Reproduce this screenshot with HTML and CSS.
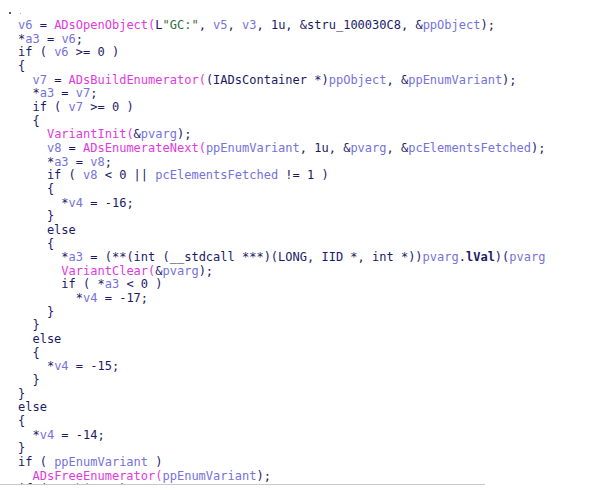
FILE: index.html
```html
<!DOCTYPE html>
<html>
<head>
<meta charset="utf-8">
<link rel="stylesheet" href="styles.css">
</head>
<body>
<div class="view">
<div class="code"><div class="dots"><span class="dot"></span><span class="dot dot2"></span></div>
<div class="ln"><span class="v">v6</span> = <span class="f">ADsOpenObject(</span>L<span class="s">"GC:"</span>, <span class="v">v5</span>, <span class="v">v3</span>, 1u, &amp;stru_100030C8, &amp;<span class="v">ppObject</span>);</div>
<div class="ln">*<span class="v">a3</span> = <span class="v">v6</span>;</div>
<div class="ln">if ( <span class="v">v6</span> &gt;= 0 )</div>
<div class="ln">{</div>
<div class="ln">  <span class="v">v7</span> = <span class="f">ADsBuildEnumerator(</span>(IADsContainer *)<span class="v">ppObject</span>, &amp;<span class="v">ppEnumVariant</span>);</div>
<div class="ln">  *<span class="v">a3</span> = <span class="v">v7</span>;</div>
<div class="ln">  if ( <span class="v">v7</span> &gt;= 0 )</div>
<div class="ln">  {</div>
<div class="ln">    <span class="f">VariantInit(</span>&amp;<span class="v">pvarg</span>);</div>
<div class="ln">    <span class="v">v8</span> = <span class="f">ADsEnumerateNext(</span><span class="v">ppEnumVariant</span>, 1u, &amp;<span class="v">pvarg</span>, &amp;<span class="v">pcElementsFetched</span>);</div>
<div class="ln">    *<span class="v">a3</span> = <span class="v">v8</span>;</div>
<div class="ln">    if ( <span class="v">v8</span> &lt; 0 || <span class="v">pcElementsFetched</span> != 1 )</div>
<div class="ln">    {</div>
<div class="ln">      *<span class="v">v4</span> = -16;</div>
<div class="ln">    }</div>
<div class="ln">    else</div>
<div class="ln">    {</div>
<div class="ln">      *<span class="v">a3</span> = (**(int (__stdcall ***)(LONG, IID *, int *))<span class="v">pvarg</span>.<span class="m">lVal</span>)(<span class="v">pvarg</span>.<span class="m">lVal</span>, &amp;stru_10003018, &amp;<span class="v">v9</span>);</div>
<div class="ln">      <span class="f">VariantClear(</span>&amp;<span class="v">pvarg</span>);</div>
<div class="ln">      if ( *<span class="v">a3</span> &lt; 0 )</div>
<div class="ln">        *<span class="v">v4</span> = -17;</div>
<div class="ln">    }</div>
<div class="ln">  }</div>
<div class="ln">  else</div>
<div class="ln">  {</div>
<div class="ln">    *<span class="v">v4</span> = -15;</div>
<div class="ln">  }</div>
<div class="ln">}</div>
<div class="ln">else</div>
<div class="ln">{</div>
<div class="ln">  *<span class="v">v4</span> = -14;</div>
<div class="ln">}</div>
<div class="ln">if ( <span class="v">ppEnumVariant</span> )</div>
<div class="ln">  <span class="f">ADsFreeEnumerator(</span><span class="v">ppEnumVariant</span>);</div>
<div class="ln">if ( <span class="v">ppObject</span> )</div>
</div>
<div class="rule"></div>
</div>
</body>
</html>
```
FILE: styles.css
```css
html, body {
  margin: 0;
  padding: 0;
  background: #ffffff;
}

.view {
  width: 591px;
  height: 490px;
  overflow: hidden;
}

.code {
  width: 546px;
  height: 484px;
  overflow: hidden;
  box-sizing: border-box;
  padding-left: 18px;
  font-family: "DejaVu Sans Mono", "Liberation Mono", monospace;
  font-size: 12px;
  line-height: 13.67px;
  color: #1a1a66;
}

.dots {
  height: 19px;
  display: flex;
  align-items: flex-end;
  gap: 9px;
  margin-left: -9px;
  padding-bottom: 5px;
  box-sizing: border-box;
}

.dot {
  width: 2px;
  height: 2px;
  background: #555577;
}

.dot2 {
  width: 1px;
  height: 1px;
  background: #aaaacc;
}

.ln {
  height: 13.67px;
  white-space: pre;
}

.v {
  color: #7572dc;
}

.f {
  color: #e03ade;
}

.s {
  color: #2e6e3a;
}

.m {
  color: #1a1a66;
  font-weight: bold;
}

.rule {
  width: 485px;
  height: 1px;
  background: #c9c9c9;
}
```
